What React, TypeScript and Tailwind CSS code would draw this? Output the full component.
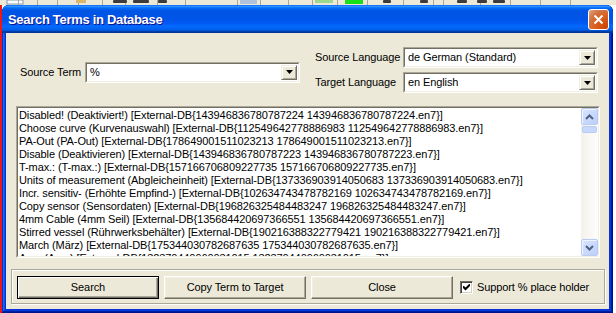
const ROWS = [
  "Disabled! (Deaktiviert!) [External-DB{143946836780787224 143946836780787224.en7}]",
  "Choose curve (Kurvenauswahl) [External-DB{112549642778886983 112549642778886983.en7}]",
  "PA-Out (PA-Out) [External-DB{178649001511023213 178649001511023213.en7}]",
  "Disable (Deaktivieren) [External-DB{143946836780787223 143946836780787223.en7}]",
  "T-max.: (T-max.:) [External-DB{157166706809227735 157166706809227735.en7}]",
  "Units of measurement (Abgleicheinheit) [External-DB{137336903914050683 137336903914050683.en7}]",
  "Incr. sensitiv- (Erhöhte Empfind-) [External-DB{102634743478782169 102634743478782169.en7}]",
  "Copy sensor (Sensordaten) [External-DB{196826325484483247 196826325484483247.en7}]",
  "4mm Cable (4mm Seil) [External-DB{135684420697366551 135684420697366551.en7}]",
  "Stirred vessel (Rührwerksbehälter) [External-DB{190216388322779421 190216388322779421.en7}]",
  "March (März) [External-DB{175344030782687635 175344030782687635.en7}]",
  "Aug. (Aug.) [External-DB{132370440960031015 132370440960031015.en7}]",
];

// bits of the app toolbar peeking out above the dialog
function ToolbarStrip() {
  const seps = [18, 37, 57, 78, 102, 125, 157, 185, 237, 260, 288, 312, 337, 367, 403, 433, 443, 480, 510, 540, 570];
  const blobs = [
    [113, 14], [133, 16], [158, 9], [383, 8], [420, 8], [457, 10], [477, 10], [493, 12],
  ];
  return (
    <svg width="616" height="5" className="block">
      <rect width="616" height="5" fill="#ECE9D8" />
      <rect x="7" y="0" width="16" height="4" fill="#FFFFFF" stroke="#7F9DB9" strokeWidth="1" />
      {seps.map((x) => (
        <rect key={x} x={x} y="0" width="1" height="5" fill="#ACA899" />
      ))}
      {blobs.map(([x, w]) => (
        <rect key={x} x={x} y="0" width={w} height="3" rx="1" fill="#3C3C3C" />
      ))}
      <rect x="76" y="0" width="10" height="3" fill="#D9B86C" />
      <rect x="240" y="0" width="17" height="4" fill="#AFC3DA" />
      <rect x="315" y="0" width="18" height="3" fill="#9CD88E" />
      <rect x="345" y="0" width="18" height="4" fill="#18E018" />
    </svg>
  );
}

function DropButton() {
  return (
    <div className="flex h-full w-[16px] items-center justify-center border border-t-[#F1EFE2] border-l-[#F1EFE2] border-r-[#716F64] border-b-[#716F64] bg-[#ECE9D8] shadow-[inset_1px_1px_#FFFFFF,inset_-1px_-1px_#ACA899]">
      <svg width="7" height="4" viewBox="0 0 7 4">
        <path d="M0 0h7L3.5 4z" fill="#000" />
      </svg>
    </div>
  );
}

function Combo({ value, className }: { value: string; className: string }) {
  return (
    <div className={`flex h-[21px] border border-t-[#ACA899] border-l-[#ACA899] border-r-white border-b-white ${className}`}>
      <div className="flex flex-1 border border-t-[#716F64] border-l-[#716F64] border-r-[#F1EFE2] border-b-[#F1EFE2] bg-white p-[1px]">
        <span className="flex-1 pl-[2px] leading-[15px]">{value}</span>
        <DropButton />
      </div>
    </div>
  );
}

function ScrollArrow({ up }: { up?: boolean }) {
  return (
    <div className="flex h-[17px] w-[17px] items-center justify-center rounded-[2px] border border-[#B9CBF3] bg-[linear-gradient(135deg,#D9E5FD,#BCCFFB)] shadow-[inset_1px_1px_#F0F4FE]">
      <svg width="9" height="6" viewBox="0 0 9 6">
        <path
          d={up ? "M1 5L4.5 1.5L8 5" : "M1 1L4.5 4.5L8 1"}
          fill="none"
          stroke="#4D6185"
          strokeWidth="2"
        />
      </svg>
    </div>
  );
}

function WinButton({ label, isDefault }: { label: string; isDefault?: boolean }) {
  return (
    <div
      className={`flex h-[23px] w-[142px] items-center justify-center bg-[#ECE9D8] ${
        isDefault
          ? "border border-black shadow-[inset_1px_1px_#FFFFFF,inset_-1px_-1px_#716F64,inset_-2px_-2px_#ACA899]"
          : "border border-t-white border-l-white border-r-[#716F64] border-b-[#716F64] shadow-[inset_-1px_-1px_#ACA899,inset_1px_1px_#F1EFE2]"
      }`}
    >
      {label}
    </div>
  );
}

export default function App() {
  return (
    <div className="flex h-[313px] w-[616px] flex-col overflow-hidden bg-white font-['Liberation_Sans',Arial,sans-serif] text-[11px] tracking-[-0.1px] text-black">
      <ToolbarStrip />
      <div className="flex flex-1">
        <div className="w-[2px] bg-[#E81818]" />
        <div className="flex w-[611px] flex-col rounded-t-[7px] bg-[#0831D9] shadow-[inset_-1px_-1px_#00138C,inset_1px_1px_#0831D9,inset_-2px_-2px_#001EA0,inset_2px_2px_#166AEE,inset_-3px_-3px_#003BDA,inset_3px_3px_#0855DD]">
          {/* caption */}
          <div className="flex h-[28px] items-center rounded-t-[7px] bg-[linear-gradient(180deg,#0058EE_0%,#3593FF_4%,#288EFF_6%,#127DFF_8%,#036FFC_10%,#0262EE_14%,#0057E5_20%,#0054E3_24%,#0055EB_56%,#005BF5_66%,#026AFE_76%,#0062EF_86%,#0052D6_92%,#0040AB_94%,#003092_100%)] pl-[6px] pr-[4px]">
            <span className="flex-1 pt-[1px] text-[13px] font-bold tracking-[-0.3px] text-white [text-shadow:1px_1px_#0F1089]">
              Search Terms in Database
            </span>
            <div className="flex h-[21px] w-[21px] items-center justify-center rounded-[3px] border border-white bg-[radial-gradient(circle_at_90%_90%,#CC4600_0%,#DC6527_55%,#CD7546_70%,#E8A883_100%)]">
              <svg width="11" height="11" viewBox="0 0 11 11">
                <path d="M1.5 1.5L9.5 9.5M9.5 1.5L1.5 9.5" stroke="#FFFFFF" strokeWidth="2" />
              </svg>
            </div>
          </div>

          {/* body */}
          <div className="mx-[4px] mb-[4px] flex flex-1 flex-col bg-[#ECE9D8] pt-[14px] pb-[5px]">
            <div className="flex items-center">
              <div className="flex items-center pt-[4px] pl-[14px]">
                <span className="w-[65px]">Source Term</span>
                <Combo value="%" className="w-[215px]" />
              </div>
              <div className="ml-[15px] flex flex-col gap-[4px]">
                <div className="flex items-center">
                  <span className="w-[88px]">Source Language</span>
                  <Combo value="de German (Standard)" className="w-[195px]" />
                </div>
                <div className="flex items-center">
                  <span className="w-[88px]">Target Language</span>
                  <Combo value="en English" className="w-[195px]" />
                </div>
              </div>
            </div>

            {/* result list */}
            <div className="mt-[13px] ml-[10px] mr-[9px] flex h-[152px] border border-t-[#ACA899] border-l-[#ACA899] border-r-white border-b-white">
              <div className="flex flex-1 border border-t-[#716F64] border-l-[#716F64] border-r-[#F1EFE2] border-b-[#F1EFE2] bg-white">
                <div className="flex-1 overflow-hidden pt-[1px] pl-[1px]">
                  {ROWS.map((r) => (
                    <div key={r} className="whitespace-nowrap leading-[13px]">
                      {r}
                    </div>
                  ))}
                </div>
                <div className="flex w-[17px] flex-col bg-[linear-gradient(90deg,#F3F1EC,#FEFEFB)]">
                  <ScrollArrow up />
                  <div className="mx-auto mt-[1px] h-[7px] w-[15px] rounded-[2px] border border-[#B9CBF3] bg-[#C8D8FC]" />
                  <div className="flex-1" />
                  <ScrollArrow />
                </div>
              </div>
            </div>

            {/* action bar */}
            <div className="mt-[11px] ml-[5px] mr-[4px] flex h-[35px] gap-[5px] border border-[#ACA899] pt-[6px] pl-[5px] shadow-[inset_1px_1px_#FFFFFF,1px_1px_#FFFFFF]">
              <WinButton label="Search" isDefault />
              <WinButton label="Copy Term to Target" />
              <WinButton label="Close" />
              <div className="ml-[2px] flex h-[23px] items-center gap-[4px]">
                <div className="flex h-[13px] w-[13px] items-center justify-center border border-t-[#716F64] border-l-[#716F64] border-r-white border-b-white bg-white shadow-[inset_1px_1px_#404040,inset_-1px_-1px_#D4D0C8]">
                  <svg width="7" height="7" viewBox="0 0 7 7">
                    <path d="M0 2.5L2.5 5L7 0.5" fill="none" stroke="#000" strokeWidth="2" />
                  </svg>
                </div>
                <span>Support % place holder</span>
              </div>
            </div>
          </div>
        </div>
        <div className="flex-1 bg-white" />
      </div>
    </div>
  );
}
